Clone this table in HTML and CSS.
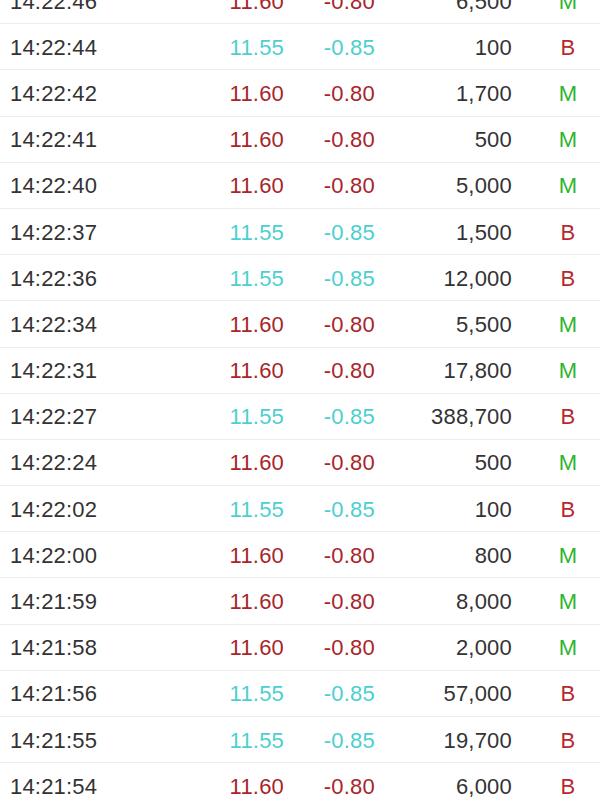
FILE: index.html
```html
<!DOCTYPE html>
<html>
<head>
<meta charset="utf-8">
<link rel="stylesheet" href="styles.css">
</head>
<body>
<div class="list">
  <div class="row"><span class="time">14:22:46</span><span class="price up">11.60</span><span class="chg up">-0.80</span><span class="vol">6,500</span><span class="side m">M</span></div>
  <div class="row"><span class="time">14:22:44</span><span class="price dn">11.55</span><span class="chg dn">-0.85</span><span class="vol">100</span><span class="side b">B</span></div>
  <div class="row"><span class="time">14:22:42</span><span class="price up">11.60</span><span class="chg up">-0.80</span><span class="vol">1,700</span><span class="side m">M</span></div>
  <div class="row"><span class="time">14:22:41</span><span class="price up">11.60</span><span class="chg up">-0.80</span><span class="vol">500</span><span class="side m">M</span></div>
  <div class="row"><span class="time">14:22:40</span><span class="price up">11.60</span><span class="chg up">-0.80</span><span class="vol">5,000</span><span class="side m">M</span></div>
  <div class="row"><span class="time">14:22:37</span><span class="price dn">11.55</span><span class="chg dn">-0.85</span><span class="vol">1,500</span><span class="side b">B</span></div>
  <div class="row"><span class="time">14:22:36</span><span class="price dn">11.55</span><span class="chg dn">-0.85</span><span class="vol">12,000</span><span class="side b">B</span></div>
  <div class="row"><span class="time">14:22:34</span><span class="price up">11.60</span><span class="chg up">-0.80</span><span class="vol">5,500</span><span class="side m">M</span></div>
  <div class="row"><span class="time">14:22:31</span><span class="price up">11.60</span><span class="chg up">-0.80</span><span class="vol">17,800</span><span class="side m">M</span></div>
  <div class="row"><span class="time">14:22:27</span><span class="price dn">11.55</span><span class="chg dn">-0.85</span><span class="vol">388,700</span><span class="side b">B</span></div>
  <div class="row"><span class="time">14:22:24</span><span class="price up">11.60</span><span class="chg up">-0.80</span><span class="vol">500</span><span class="side m">M</span></div>
  <div class="row"><span class="time">14:22:02</span><span class="price dn">11.55</span><span class="chg dn">-0.85</span><span class="vol">100</span><span class="side b">B</span></div>
  <div class="row"><span class="time">14:22:00</span><span class="price up">11.60</span><span class="chg up">-0.80</span><span class="vol">800</span><span class="side m">M</span></div>
  <div class="row"><span class="time">14:21:59</span><span class="price up">11.60</span><span class="chg up">-0.80</span><span class="vol">8,000</span><span class="side m">M</span></div>
  <div class="row"><span class="time">14:21:58</span><span class="price up">11.60</span><span class="chg up">-0.80</span><span class="vol">2,000</span><span class="side m">M</span></div>
  <div class="row"><span class="time">14:21:56</span><span class="price dn">11.55</span><span class="chg dn">-0.85</span><span class="vol">57,000</span><span class="side b">B</span></div>
  <div class="row"><span class="time">14:21:55</span><span class="price dn">11.55</span><span class="chg dn">-0.85</span><span class="vol">19,700</span><span class="side b">B</span></div>
  <div class="row"><span class="time">14:21:54</span><span class="price up">11.60</span><span class="chg up">-0.80</span><span class="vol">6,000</span><span class="side b">B</span></div>
</div>
</body>
</html>
```

FILE: styles.css
```css
html, body {
  margin: 0;
  padding: 0;
  background: #ffffff;
  overflow: hidden;
}
body {
  width: 600px;
  height: 800px;
  font-family: "Liberation Sans", Arial, sans-serif;
  font-size: 22px;
  color: #333333;
}
.list {
  margin-top: -22px;
}
.row {
  box-sizing: border-box;
  height: 46.2px;
  border-bottom: 1px solid #ececec;
  display: grid;
  grid-template-columns: 190px 84px 91px 137px 28px 56px;
  padding-left: 10px;
  padding-top: 2px;
  align-items: center;
  letter-spacing: 0.2px;
}
.time { text-align: left; }
.price, .chg, .vol { text-align: right; }
.side { grid-column: 6; text-align: center; font-size: 22px; }
.up { color: #a8262b; }
.dn { color: #4dcfd0; }
.m { color: #2db52d; }
.b { color: #b8282e; }
```
